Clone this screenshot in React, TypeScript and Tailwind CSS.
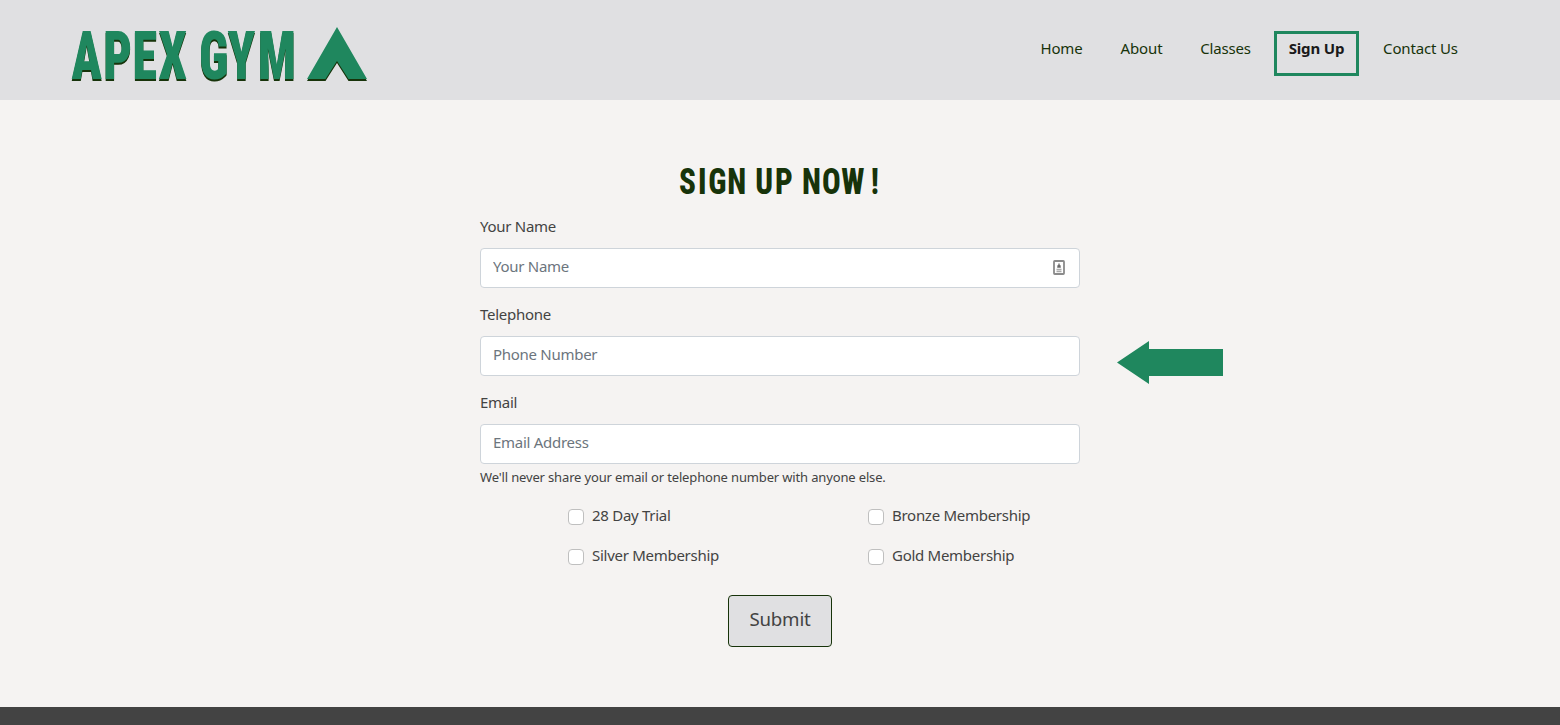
const links = [
  { label: 'Home', box: 'w-[79px]' },
  { label: 'About', box: 'w-[81px]' },
  { label: 'Classes', box: 'w-[87px]' },
  { label: 'Sign Up', box: 'w-[85px] ml-[5px] mr-[19px]', active: true },
  { label: 'Contact Us', box: 'w-[85px]' },
];

const fields = [
  { label: 'Your Name', placeholder: 'Your Name', type: 'text', contact: true },
  { label: 'Telephone', placeholder: 'Phone Number', type: 'tel' },
  { label: 'Email', placeholder: 'Email Address', type: 'email' },
];

const plans = ['28 Day Trial', 'Bronze Membership', 'Silver Membership', 'Gold Membership'];

function Logo() {
  return (
    <svg width="300" height="84" viewBox="70 12 300 84" className="block overflow-visible drop-shadow-[0_2px_0_#17330a]" role="img">
      <g fill="#1f875e">
        <text
          transform="translate(71.500 79) scale(.75 1)"
          x="0 42.5 81.500 116 158 170 208 248.500"
          y="0"
          fontSize="67"
          className="font-['Roboto_Condensed',sans-serif] font-black"
        >
          APEX GYM
        </text>
        <path d="M337 27 367 79H348.500L337 61 325.500 79H307Z" />
      </g>
    </svg>
  );
}

function ContactIcon() {
  return (
    <svg width="12" height="15" viewBox="0 0 12 15" className="absolute right-[15px] top-3">
      <rect x="1" y="1" width="10" height="13" rx=".7" fill="#fff" stroke="#8b8b8b" strokeWidth="1.8" />
      <path d="M6 3V5M4.500 7.500C4.500 5.500 5 4.500 6 4.500S7.500 5.500 7.500 7.500Z" fill="#666" stroke="#888" strokeWidth=".8" />
      <path d="M3.500 9.500H8.500M3.500 11.500H8.500" stroke="#aaa" strokeWidth="1.300" />
    </svg>
  );
}

export default function App() {
  return (
    <div className="flex h-[725px] flex-col overflow-hidden bg-[#f5f3f2] font-['Noto_Sans',sans-serif] text-[15px] leading-6 tracking-[-0.28px] text-[#434343]">
      <header className="flex h-[100px] shrink-0 items-start justify-between bg-[#e0e0e2] pl-[70px] pr-[97px]">
        <a className="mt-3"><Logo /></a>
        <nav className="mt-[31px] flex text-center text-[15px] tracking-[-0.15px] text-[#17330a]">
          {links.map((l) => (
            <a
              key={l.label}
              className={`h-[45px] whitespace-nowrap border-[3px] pt-[2px] ${l.box} ${
                l.active ? 'border-[#1f875e] font-bold text-[#1a1a1a]' : 'border-transparent'
              }`}
            >
              {l.label}
            </a>
          ))}
        </nav>
      </header>

      <main className="grid grow grid-cols-[480px_600px_480px]">
        <form className="col-start-2 flex flex-col items-stretch pt-[59px]">
          <h1 className="flex h-[55px] justify-center">
            <svg width="204" height="48" viewBox="678 159 204 48" className="overflow-visible">
              <text
                transform="translate(678 194) scale(.84 1)"
                x="1.300 23.700 36 58.500 82 92 115.500 137 147.500 171.500 194.500 229.500"
                y="0"
                fontSize="37"
                fill="#17330a"
                className="font-['Roboto_Condensed',sans-serif] font-extrabold"
              >
                SIGN UP NOW!
              </text>
            </svg>
          </h1>
          <div className="flex flex-col gap-4">
            {fields.map((f) => (
              <div key={f.label} className="flex flex-col gap-2">
                <label className="block pt-px leading-[23px]">{f.label}</label>
                <div className="relative mt-[2px] -mb-[2px]">
                  <input
                    type={f.type}
                    placeholder={f.placeholder}
                    className="block h-10 w-full rounded border border-[#ced4da] bg-white px-3 pb-[4px] placeholder:text-[#6c757d] placeholder:opacity-100"
                  />
                  {f.contact && <ContactIcon />}
                </div>
              </div>
            ))}
          </div>
          <small className="mt-[5px] block text-[13px] leading-[21px] tracking-[-0.15px]">
            We'll never share your email or telephone number with anyone else.
          </small>
          <div className="mt-4 grid auto-rows-[24px] grid-cols-2 gap-y-4">
            {plans.map((p) => (
              <label key={p} className="flex gap-2 pl-[88px]">
                <input type="checkbox" className="mt-[5px] size-4 appearance-none rounded-[4px] border border-[#bfbfbf] bg-white" />
                <span className="-mt-px">{p}</span>
              </label>
            ))}
          </div>
          <button
            type="button"
            className="mt-[27px] h-[52px] w-[104px] self-center rounded border border-[#17330a] bg-[#e0e0e2] pb-[4px] text-[18.7px] tracking-[-0.2px]"
          >
            Submit
          </button>
        </form>
        <svg width="106" height="43" viewBox="0 0 106 43" className="ml-[37px] mt-[241px]">
          <path d="M0 21.500 32 0V8H106V35H32V43Z" fill="#1f875e" />
        </svg>
      </main>

      <footer className="h-[18px] shrink-0 bg-[#434343]" />
    </div>
  );
}
